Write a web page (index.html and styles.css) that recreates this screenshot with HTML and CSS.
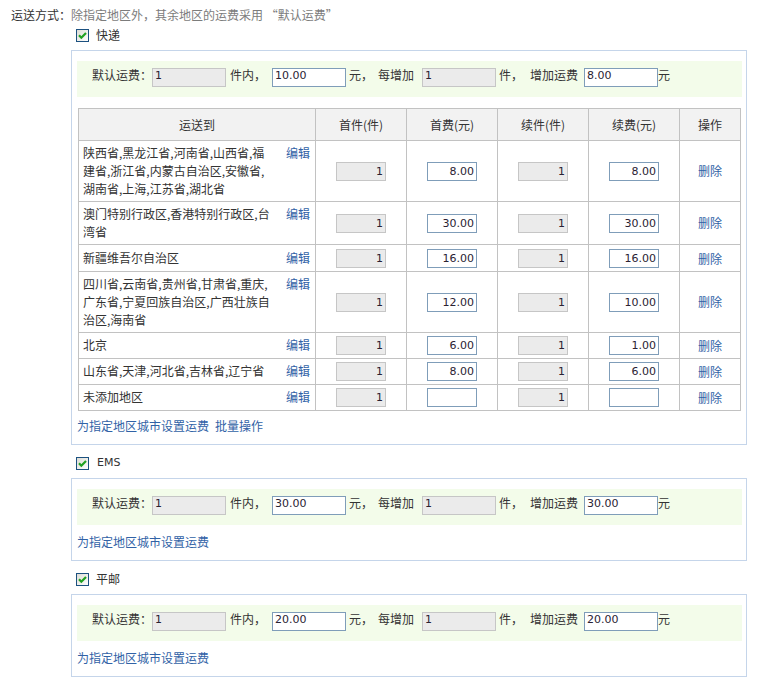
FILE: index.html
```html
<!DOCTYPE html>
<html lang="zh-CN">
<head>
<meta charset="utf-8">
<title>运送方式</title>
<link rel="stylesheet" href="styles.css">
</head>
<body>
<div class="page">
  <div class="intro"><span class="intro-label">运送方式：</span><span class="intro-note">除指定地区外，其余地区的运费采用 “默认运费”</span></div>

  <div class="method">
    <div class="method-title method-first">
      <svg class="check" width="13" height="13" viewBox="0 0 13 13"><defs><linearGradient id="cb1" x1="0" y1="0" x2="1" y2="1"><stop offset="0" stop-color="#dcdcd4"/><stop offset="1" stop-color="#ffffff"/></linearGradient></defs><rect x="0.5" y="0.5" width="12" height="12" fill="url(#cb1)" stroke="#1c5180"/><path d="M3 6.3 L5.3 8.7 L10 3.9" fill="none" stroke="#21a121" stroke-width="2.2"/></svg>
      <span class="method-name">快递</span>
    </div>
    <div class="method-box">
      <div class="fee-row">
        <span class="txt">默认运费：</span>
        <input class="inp inp-gray" type="text" value="1" readonly>
        <span class="txt m4">件内，</span>
        <input class="inp m6" type="text" value="10.00" readonly>
        <span class="txt m3">元，</span>
        <span class="txt m5">每增加</span>
        <input class="inp inp-gray m8" type="text" value="1" readonly>
        <span class="txt m3">件，</span>
        <span class="txt m7">增加运费</span>
        <input class="inp m6" type="text" value="8.00" readonly>
        <span class="txt">元</span>
      </div>
      <table class="area-table">
        <colgroup><col class="c-area"><col class="c-num"><col class="c-num"><col class="c-num"><col class="c-num"><col class="c-op"></colgroup>
        <thead>
          <tr><th>运送到</th><th>首件(件)</th><th>首费(元)</th><th>续件(件)</th><th>续费(元)</th><th>操作</th></tr>
        </thead>
        <tbody>
          <tr>
            <td class="area"><div class="area-wrap"><span class="area-name">陕西省,黑龙江省,河南省,山西省,福建省,浙江省,内蒙古自治区,安徽省,湖南省,上海,江苏省,湖北省</span><a class="link" href="#">编辑</a></div></td>
            <td><input class="cell-inp inp-gray" type="text" value="1" readonly></td>
            <td><input class="cell-inp" type="text" value="8.00" readonly></td>
            <td><input class="cell-inp inp-gray" type="text" value="1" readonly></td>
            <td><input class="cell-inp" type="text" value="8.00" readonly></td>
            <td><a class="link" href="#">删除</a></td>
          </tr>
          <tr>
            <td class="area"><div class="area-wrap"><span class="area-name">澳门特别行政区,香港特别行政区,台湾省</span><a class="link" href="#">编辑</a></div></td>
            <td><input class="cell-inp inp-gray" type="text" value="1" readonly></td>
            <td><input class="cell-inp" type="text" value="30.00" readonly></td>
            <td><input class="cell-inp inp-gray" type="text" value="1" readonly></td>
            <td><input class="cell-inp" type="text" value="30.00" readonly></td>
            <td><a class="link" href="#">删除</a></td>
          </tr>
          <tr class="row-tall">
            <td class="area"><div class="area-wrap"><span class="area-name">新疆维吾尔自治区</span><a class="link" href="#">编辑</a></div></td>
            <td><input class="cell-inp inp-gray" type="text" value="1" readonly></td>
            <td><input class="cell-inp" type="text" value="16.00" readonly></td>
            <td><input class="cell-inp inp-gray" type="text" value="1" readonly></td>
            <td><input class="cell-inp" type="text" value="16.00" readonly></td>
            <td><a class="link" href="#">删除</a></td>
          </tr>
          <tr>
            <td class="area"><div class="area-wrap"><span class="area-name">四川省,云南省,贵州省,甘肃省,重庆,广东省,宁夏回族自治区,广西壮族自治区,海南省</span><a class="link" href="#">编辑</a></div></td>
            <td><input class="cell-inp inp-gray" type="text" value="1" readonly></td>
            <td><input class="cell-inp" type="text" value="12.00" readonly></td>
            <td><input class="cell-inp inp-gray" type="text" value="1" readonly></td>
            <td><input class="cell-inp" type="text" value="10.00" readonly></td>
            <td><a class="link" href="#">删除</a></td>
          </tr>
          <tr>
            <td class="area"><div class="area-wrap"><span class="area-name">北京</span><a class="link" href="#">编辑</a></div></td>
            <td><input class="cell-inp inp-gray" type="text" value="1" readonly></td>
            <td><input class="cell-inp" type="text" value="6.00" readonly></td>
            <td><input class="cell-inp inp-gray" type="text" value="1" readonly></td>
            <td><input class="cell-inp" type="text" value="1.00" readonly></td>
            <td><a class="link" href="#">删除</a></td>
          </tr>
          <tr>
            <td class="area"><div class="area-wrap"><span class="area-name">山东省,天津,河北省,吉林省,辽宁省</span><a class="link" href="#">编辑</a></div></td>
            <td><input class="cell-inp inp-gray" type="text" value="1" readonly></td>
            <td><input class="cell-inp" type="text" value="8.00" readonly></td>
            <td><input class="cell-inp inp-gray" type="text" value="1" readonly></td>
            <td><input class="cell-inp" type="text" value="6.00" readonly></td>
            <td><a class="link" href="#">删除</a></td>
          </tr>
          <tr>
            <td class="area"><div class="area-wrap"><span class="area-name">未添加地区</span><a class="link" href="#">编辑</a></div></td>
            <td><input class="cell-inp inp-gray" type="text" value="1" readonly></td>
            <td><input class="cell-inp" type="text" value="" readonly></td>
            <td><input class="cell-inp inp-gray" type="text" value="1" readonly></td>
            <td><input class="cell-inp" type="text" value="" readonly></td>
            <td><a class="link" href="#">删除</a></td>
          </tr>
        </tbody>
      </table>
      <div class="box-links box-links-table"><a class="link" href="#">为指定地区城市设置运费</a><a class="link gap" href="#">批量操作</a></div>
    </div>
  </div>

  <div class="method">
    <div class="method-title">
      <svg class="check" width="13" height="13" viewBox="0 0 13 13"><defs><linearGradient id="cb2" x1="0" y1="0" x2="1" y2="1"><stop offset="0" stop-color="#dcdcd4"/><stop offset="1" stop-color="#ffffff"/></linearGradient></defs><rect x="0.5" y="0.5" width="12" height="12" fill="url(#cb2)" stroke="#1c5180"/><path d="M3 6.3 L5.3 8.7 L10 3.9" fill="none" stroke="#21a121" stroke-width="2.2"/></svg>
      <span class="method-name latin">EMS</span>
    </div>
    <div class="method-box">
      <div class="fee-row">
        <span class="txt">默认运费：</span>
        <input class="inp inp-gray" type="text" value="1" readonly>
        <span class="txt m4">件内，</span>
        <input class="inp m6" type="text" value="30.00" readonly>
        <span class="txt m3">元，</span>
        <span class="txt m5">每增加</span>
        <input class="inp inp-gray m8" type="text" value="1" readonly>
        <span class="txt m3">件，</span>
        <span class="txt m7">增加运费</span>
        <input class="inp m6" type="text" value="30.00" readonly>
        <span class="txt">元</span>
      </div>
      <div class="box-links"><a class="link" href="#">为指定地区城市设置运费</a></div>
    </div>
  </div>

  <div class="method">
    <div class="method-title">
      <svg class="check" width="13" height="13" viewBox="0 0 13 13"><defs><linearGradient id="cb3" x1="0" y1="0" x2="1" y2="1"><stop offset="0" stop-color="#dcdcd4"/><stop offset="1" stop-color="#ffffff"/></linearGradient></defs><rect x="0.5" y="0.5" width="12" height="12" fill="url(#cb3)" stroke="#1c5180"/><path d="M3 6.3 L5.3 8.7 L10 3.9" fill="none" stroke="#21a121" stroke-width="2.2"/></svg>
      <span class="method-name">平邮</span>
    </div>
    <div class="method-box">
      <div class="fee-row">
        <span class="txt">默认运费：</span>
        <input class="inp inp-gray" type="text" value="1" readonly>
        <span class="txt m4">件内，</span>
        <input class="inp m6" type="text" value="20.00" readonly>
        <span class="txt m3">元，</span>
        <span class="txt m5">每增加</span>
        <input class="inp inp-gray m8" type="text" value="1" readonly>
        <span class="txt m3">件，</span>
        <span class="txt m7">增加运费</span>
        <input class="inp m6" type="text" value="20.00" readonly>
        <span class="txt">元</span>
      </div>
      <div class="box-links"><a class="link" href="#">为指定地区城市设置运费</a></div>
    </div>
  </div>
</div>
</body>
</html>
```

FILE: styles.css
```css
* {
  box-sizing: border-box;
}

body {
  margin: 0;
  background: #ffffff;
  font-family: "Noto Sans CJK SC", "Liberation Sans", sans-serif;
  font-size: 12px;
  line-height: 18px;
  color: #333333;
}

.page {
  padding: 6px 0 0 11px;
}

.intro {
  height: 18px;
  white-space: nowrap;
}

.intro-label {
  color: #333333;
}

.intro-note {
  color: #7c7c7c;
}

.method {
  margin-left: 60px;
  width: 676px;
}

.method-title {
  display: flex;
  align-items: center;
  height: 18px;
  padding-left: 5px;
  margin-top: 9px;
  margin-bottom: 6px;
}

.method-first {
  margin-top: 2px;
}

.check {
  display: block;
  flex: none;
  margin-right: 7px;
}

.method-name {
  color: #333333;
}

.latin {
  font-family: "DejaVu Sans", sans-serif;
  font-size: 11px;
  margin-left: 1px;
}

.method-box {
  border: 1px solid #c5d5ea;
  padding: 10px 4px 9px 5px;
}

.fee-row {
  display: flex;
  align-items: flex-start;
  height: 36px;
  padding: 7px 0 0 15px;
  background: #f3fcea;
}

.txt {
  line-height: 14px;
  white-space: nowrap;
  color: #333333;
}

.m3 { margin-left: 3px; }
.m4 { margin-left: 4px; }
.m5 { margin-left: 5px; }
.m6 { margin-left: 6px; }
.m7 { margin-left: 7px; }
.m8 { margin-left: 8px; }

.inp {
  flex: none;
  width: 74px;
  height: 19px;
  margin-top: 0;
  margin-bottom: 0;
  margin-right: 0;
  padding: 0 0 4px 2px;
  border: 1px solid #7f9db9;
  border-radius: 0;
  background: #ffffff;
  font-family: "DejaVu Sans", sans-serif;
  font-size: 11px;
  line-height: 13px;
  color: #2a2233;
  outline: none;
  -webkit-appearance: none;
  appearance: none;
}

.inp-gray {
  background: #ebebeb;
  border-color: #c6c6c6;
}

.area-table {
  border-collapse: collapse;
  table-layout: fixed;
  width: 663px;
  margin: 11px 0 0 1px;
}

.c-area { width: 237px; }
.c-num { width: 91px; }
.c-op { width: 61px; }

.area-table th,
.area-table td {
  border: 1px solid #c2c2c2;
}

.area-table th {
  height: 32px;
  padding: 0;
  background: #f2f2f2;
  font-weight: normal;
  color: #333333;
  text-align: center;
  vertical-align: middle;
}

.area-table td {
  padding: 3px 0;
  text-align: center;
  vertical-align: middle;
}

.area-table td.area {
  padding: 3px 5px 3px 4px;
  text-align: left;
  vertical-align: top;
}

.area-table .row-tall td {
  padding-top: 4px;
}

.area-wrap {
  display: flex;
  justify-content: space-between;
  align-items: flex-start;
}

.area-name {
  width: 189px;
  color: #333333;
}

.cell-inp {
  display: block;
  width: 50px;
  height: 19px;
  margin: 0 auto;
  padding: 0 2px 0 0;
  border: 1px solid #7f9db9;
  border-radius: 0;
  background: #ffffff;
  font-family: "DejaVu Sans", sans-serif;
  font-size: 11px;
  line-height: 17px;
  text-align: right;
  color: #2a2233;
  outline: none;
  -webkit-appearance: none;
  appearance: none;
}

.cell-inp.inp-gray {
  background: #ebebeb;
  border-color: #c6c6c6;
}

.link {
  color: #3162a6;
  text-decoration: none;
  white-space: nowrap;
}

.gap {
  margin-left: 6px;
}

.box-links {
  margin-top: 8px;
  height: 18px;
  line-height: 18px;
}

.box-links-table {
  margin-top: 6px;
}
```
